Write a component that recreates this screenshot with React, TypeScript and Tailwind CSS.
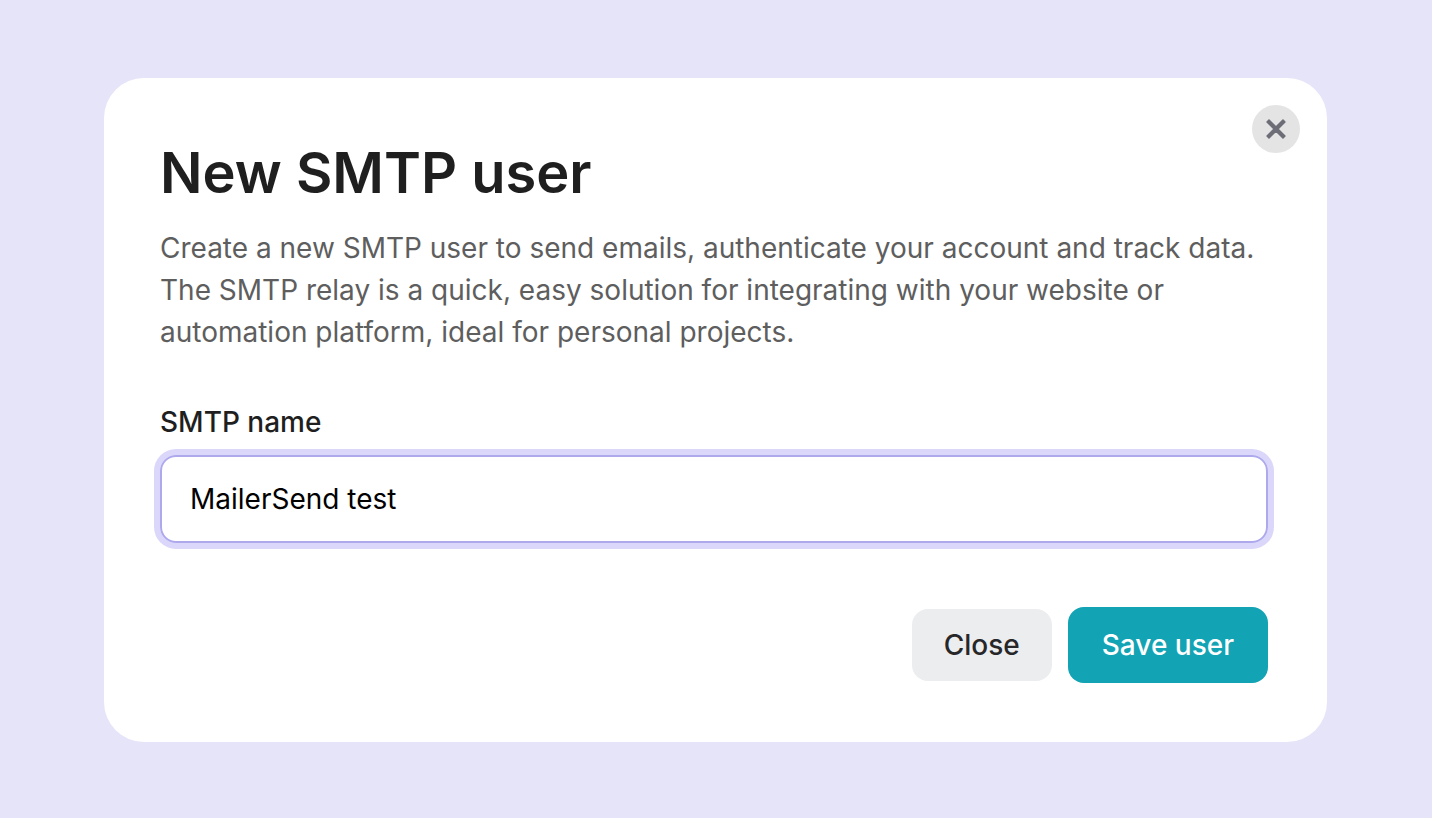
import { useState } from "react";

const App = () => {
  const [name, setName] = useState("MailerSend test");

  return (
    <div className="min-h-screen bg-[#e6e4f9] py-[78px] pr-[105px] pl-[104px] font-['Inter',sans-serif]">
      <div
        role="dialog"
        aria-labelledby="dialog-title"
        className="relative rounded-[40px] bg-white pt-[67px] pr-[59px] pb-[59px] pl-14"
      >
        <button
          type="button"
          aria-label="Close dialog"
          className="absolute top-[27px] right-[27px] flex size-12 items-center justify-center rounded-full bg-[#e4e4e4] text-[#6d6e77]"
        >
          <svg
            viewBox="0 0 20 20"
            className="size-5"
            fill="currentColor"
            stroke="currentColor"
            strokeWidth="1.6"
            strokeLinejoin="round"
          >
            <path d="M3 1.1 10 8.1 17 1.1 18.9 3 11.9 10 18.9 17 17 18.9 10 11.9 3 18.9 1.1 17 8.1 10 1.1 3Z" />
          </svg>
        </button>

        <h1 id="dialog-title" className="text-[56px] leading-14 font-semibold text-[#1f1f1f]">
          New SMTP user
        </h1>
        <p className="mt-[26px] text-[28px] leading-[42px] text-[#5e5e5e]">
          Create a new SMTP user to send emails, authenticate your account and track data. The SMTP
          relay is a quick, easy solution for integrating with your website or automation platform,
          ideal for personal projects.
        </p>

        <form onSubmit={(e) => e.preventDefault()}>
          <label htmlFor="smtp-name" className="mt-12 block text-[28px] leading-[42px] font-medium text-[#1f1f1f]">
            SMTP name
          </label>
          <input
            id="smtp-name"
            type="text"
            value={name}
            onChange={(e) => setName(e.target.value)}
            className="mt-3 block h-22 w-full rounded-2xl border-2 border-[#aea9ed] px-7 text-[28px] text-black ring-6 ring-[#dad7fb] outline-none"
          />

          <div className="mt-16 flex items-center justify-end gap-4">
            <button type="button" className="h-18 rounded-2xl bg-[#ecedef] px-8 text-[28px] font-medium text-[#27272a]">
              Close
            </button>
            <button type="submit" className="h-19 rounded-2xl bg-[#12a3b4] px-[34px] text-[28px] font-medium text-white">
              Save user
            </button>
          </div>
        </form>
      </div>
    </div>
  );
};

export default App;
